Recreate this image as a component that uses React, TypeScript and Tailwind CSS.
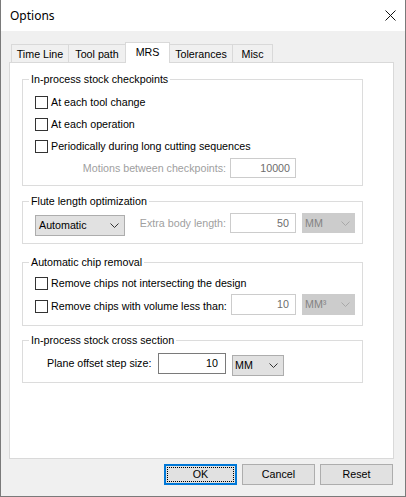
import React from 'react';

const Chevron = ({ color = '#333333' }: { color?: string }) => (
  <svg width="9" height="5" viewBox="0 0 9 5" className="shrink-0">
    <polyline points="0.5,0.5 4.5,4.5 8.5,0.5" fill="none" stroke={color} strokeWidth="1" />
  </svg>
);

const Checkbox = () => (
  <span className="w-[13px] h-[13px] shrink-0 border border-[#333333] bg-white" />
);

const Group = ({
  title,
  className,
  children,
}: {
  title: string;
  className: string;
  children: React.ReactNode;
}) => (
  <fieldset className={`ml-[12px] w-[341px] border border-[#dcdcdc] ${className}`}>
    <legend className="ml-[6px] px-[2px] leading-[13px]">{title}</legend>
    {children}
  </fieldset>
);

const tabs = [
  { label: 'Time Line', width: 'w-[58px]' },
  { label: 'Tool path', width: 'w-[58px]' },
  { label: 'MRS', width: 'w-[45px]', active: true },
  { label: 'Tolerances', width: 'w-[64px]' },
  { label: 'Misc', width: 'w-[41px]' },
];

const App = () => {
  return (
    <div className="w-[406px] h-[497px] flex flex-col border-x border-b border-[#7a7a7a] bg-[#f0f0f0] text-[10.7px] leading-[13px] text-black font-['Liberation_Sans',Arial,sans-serif]">
      {/* title bar */}
      <div className="h-[31px] shrink-0 bg-white flex items-center justify-between pl-[9px] pr-[9px]">
        <span className="text-[12px] font-['Noto_Sans',sans-serif] leading-[16px]">Options</span>
        <svg width="11" height="11" viewBox="0 0 11 11">
          <path d="M0.5 0.5 L10.5 10.5 M10.5 0.5 L0.5 10.5" stroke="#111111" strokeWidth="1" />
        </svg>
      </div>

      <div className="flex-1 pl-[8px] pt-[11px]">
        {/* tabs */}
        <div className="flex items-end h-[20px] ml-[3px]">
          {tabs.map((t) =>
            t.active ? (
              <div
                key={t.label}
                className={`${t.width} relative z-10 -ml-px -mb-px h-[21px] bg-white border border-b-0 border-[#d9d9d9] pt-[3px] text-center`}
              >
                {t.label}
              </div>
            ) : (
              <div
                key={t.label}
                className={`${t.width} -ml-px h-[18px] bg-[#f0f0f0] border border-b-0 border-[#d9d9d9] pt-[3px] text-center`}
              >
                {t.label}
              </div>
            )
          )}
        </div>

        {/* panel */}
        <div className="w-[385px] h-[397px] border border-[#d9d9d9] bg-white">
          <Group title="In-process stock checkpoints" className="mt-[10px] pt-[5px] pb-[7px]">
            {['At each tool change', 'At each operation', 'Periodically during long cutting sequences'].map((l) => (
              <div key={l} className="h-[22px] flex items-start pt-[5px] pl-[12px] gap-[3px]">
                <Checkbox />
                <span className="whitespace-nowrap">{l}</span>
              </div>
            ))}
            <div className="mt-px flex items-center">
              <span className="w-[203px] text-right text-[#a0a0a0] whitespace-nowrap">Motions between checkpoints:</span>
              <div className="ml-[4px] w-[66px] h-[20px] border border-[#cccccc] bg-white flex items-center justify-end pr-[5px] text-[#6d6d6d]">
                10000
              </div>
            </div>
          </Group>

          <Group title="Flute length optimization" className="mt-[9px] pt-[5px] pb-[7px]">
            <div className="flex items-start pl-[12px]">
              <div className="mt-[2px] w-[90px] h-[21px] border border-[#adadad] bg-[#e1e1e1] flex items-center justify-between pl-[3px] pr-[5px]">
                <span>Automatic</span>
                <Chevron />
              </div>
              <span className="w-[101px] h-[20px] flex items-center justify-end text-[#a0a0a0] whitespace-nowrap">Extra body length:</span>
              <div className="ml-[4px] w-[66px] h-[20px] border border-[#cccccc] bg-white flex items-center justify-end pr-[6px] text-[#6d6d6d]">
                50
              </div>
              <div className="ml-[6px] w-[53px] h-[20px] bg-[#cccccc] flex items-center justify-between pl-[3px] pr-[5px] text-[#838383]">
                <span>MM</span>
                <Chevron color="#a8a8a8" />
              </div>
            </div>
          </Group>

          <Group title="Automatic chip removal" className="mt-[12px] pt-[8px] pb-[10px]">
            <div className="flex items-center pl-[12px] gap-[3px]">
              <Checkbox />
              <span className="whitespace-nowrap">Remove chips not intersecting the design</span>
            </div>
            <div className="mt-[4px] flex items-start pl-[12px]">
              <div className="mt-[6px] w-[192px] flex items-center gap-[3px]">
                <Checkbox />
                <span className="whitespace-nowrap">Remove chips with volume less than:</span>
              </div>
              <div className="ml-[4px] w-[65px] h-[21px] border border-[#cccccc] bg-white flex items-center justify-end pr-[6px] text-[#6d6d6d]">
                10
              </div>
              <div className="ml-[6px] w-[53px] h-[21px] bg-[#cccccc] flex items-center justify-between pl-[3px] pr-[5px] text-[#838383]">
                <span>MM³</span>
                <Chevron color="#a8a8a8" />
              </div>
            </div>
          </Group>

          <Group title="In-process stock cross section" className="mt-[8px] pt-[6px] pb-[6px]">
            <div className="flex items-start pl-[24px]">
              <span className="w-[107px] h-[21px] flex items-center whitespace-nowrap">Plane offset step size:</span>
              <div className="ml-[4px] w-[68px] h-[21px] border border-[#7a7a7a] bg-white flex items-center justify-end pr-[7px]">
                10
              </div>
              <div className="ml-[6px] mt-[2px] w-[52px] h-[21px] border border-[#adadad] bg-[#e1e1e1] flex items-center justify-between pl-[2px] pr-[5px]">
                <span>MM</span>
                <Chevron />
              </div>
            </div>
          </Group>
        </div>

        {/* buttons */}
        <div className="mt-[5px] w-[385px] flex justify-end gap-[5px] pr-px">
          <button className="w-[73px] h-[21px] border-2 border-[#0078d7] bg-[#e1e1e1] p-px flex">
            <span className="flex-1 border border-dotted border-black flex items-center justify-center">OK</span>
          </button>
          <button className="w-[73px] h-[21px] border border-[#adadad] bg-[#e1e1e1] flex items-center justify-center">
            Cancel
          </button>
          <button className="w-[73px] h-[21px] border border-[#adadad] bg-[#e1e1e1] flex items-center justify-center">
            Reset
          </button>
        </div>
      </div>
    </div>
  );
};

export default App;
